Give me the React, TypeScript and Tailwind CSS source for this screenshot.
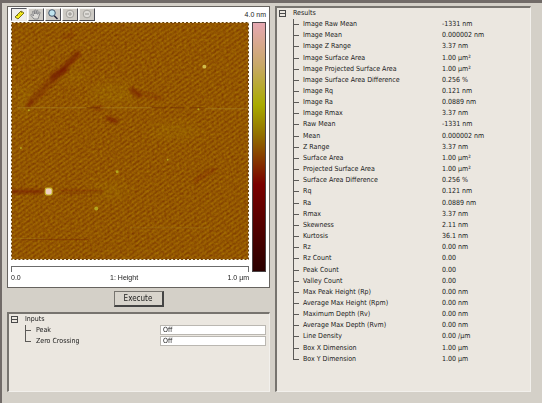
import type { ReactNode } from "react";

const results: [string, string][] = [
  ["Image Raw Mean", "-1331 nm"],
  ["Image Mean", "0.000002 nm"],
  ["Image Z Range", "3.37 nm"],
  ["Image Surface Area", "1.00 µm²"],
  ["Image Projected Surface Area", "1.00 µm²"],
  ["Image Surface Area Difference", "0.256 %"],
  ["Image Rq", "0.121 nm"],
  ["Image Ra", "0.0889 nm"],
  ["Image Rmax", "3.37 nm"],
  ["Raw Mean", "-1331 nm"],
  ["Mean", "0.000002 nm"],
  ["Z Range", "3.37 nm"],
  ["Surface Area", "1.00 µm²"],
  ["Projected Surface Area", "1.00 µm²"],
  ["Surface Area Difference", "0.256 %"],
  ["Rq", "0.121 nm"],
  ["Ra", "0.0889 nm"],
  ["Rmax", "3.37 nm"],
  ["Skewness", "2.11 nm"],
  ["Kurtosis", "36.1 nm"],
  ["Rz", "0.00 nm"],
  ["Rz Count", "0.00"],
  ["Peak Count", "0.00"],
  ["Valley Count", "0.00"],
  ["Max Peak Height (Rp)", "0.00 nm"],
  ["Average Max Height (Rpm)", "0.00 nm"],
  ["Maximum Depth (Rv)", "0.00 nm"],
  ["Average Max Depth (Rvm)", "0.00 nm"],
  ["Line Density", "0.00 /µm"],
  ["Box X Dimension", "1.00 µm"],
  ["Box Y Dimension", "1.00 µm"],
];

const inputs = [
  { id: "peak", label: "Peak" },
  { id: "zero-crossing", label: "Zero Crossing" },
];

const branch =
  "bg-[linear-gradient(#5c5a57,#5c5a57),linear-gradient(#5c5a57,#5c5a57)] bg-[position:left_top,left_center] bg-no-repeat";
const branchMid = "bg-[length:1px_100%,6px_1px]";
const branchEnd = "bg-[length:1px_50%,6px_1px]";

function ToolButton({ label, active, children }: { label: string; active?: boolean; children: ReactNode }) {
  return (
    <button
      aria-label={label}
      aria-pressed={active}
      className={
        "flex h-[13px] w-4 items-center justify-center border " +
        (active
          ? "border-t-[#55565e] border-l-[#55565e] border-r-[#e8e6e2] border-b-[#e8e6e2] bg-[#f0efec]"
          : "border-t-[#f4f3f0] border-l-[#f4f3f0] border-r-[#4c4d55] border-b-[#4c4d55] bg-[#cdcac4]")
      }
    >
      <svg viewBox="0 0 14 11" className="h-[11px] w-3.5" fill="none">
        {children}
      </svg>
    </button>
  );
}

function Toggle({ label }: { label: string }) {
  return (
    <button aria-label={label} aria-expanded="true" className="flex size-[7px] items-center border border-[#4a4a4a]">
      <span className="h-px w-full bg-[#4a4a4a]" />
    </button>
  );
}

function HeightMap() {
  return (
    <svg viewBox="0 0 240 240" className="block h-auto w-full" role="img" aria-label="Height map">
      <defs>
        <pattern id="scan" width="4" height="4" patternUnits="userSpaceOnUse" patternTransform="rotate(-36)">
          <rect width="4" height="4" fill="#a06402" />
          <rect width="4" height="2" fill="#8a4a00" />
        </pattern>
        <filter id="grain" x="0" y="0" width="100%" height="100%" colorInterpolationFilters="sRGB">
          <feTurbulence type="fractalNoise" baseFrequency="0.4" numOctaves="2" seed="4" />
          <feColorMatrix values="0.4 0 0 0 0.36  0.6 0 0 0 0.03  0 0 0 0 0  0 0 0 0 0.35" />
        </filter>
        <filter id="soft" x="-10" y="-10" width="260" height="260" filterUnits="userSpaceOnUse">
          <feGaussianBlur stdDeviation="1.6" />
        </filter>
        <filter id="wide" x="-10" y="-10" width="260" height="260" filterUnits="userSpaceOnUse">
          <feGaussianBlur stdDeviation="6" />
        </filter>
      </defs>
      <rect width="240" height="240" fill="url(#scan)" />
      <g filter="url(#wide)" fill="#a07600" opacity="0.55">
        <ellipse cx="64" cy="53" rx="12" ry="7" />
        <ellipse cx="104" cy="72" rx="26" ry="10" />
        <ellipse cx="14" cy="80" rx="8" ry="16" />
        <ellipse cx="165" cy="110" rx="26" ry="7" />
        <ellipse cx="98" cy="170" rx="20" ry="7" />
      </g>
      <rect width="240" height="240" filter="url(#grain)" />
      <g filter="url(#soft)" stroke="#741800" strokeLinecap="round">
        <path d="M67 32 50 50" strokeWidth="5" opacity="0.7" />
        <path d="M54 48 43 55" strokeWidth="7" opacity="0.65" />
        <path d="M46 54 20 81" strokeWidth="6" opacity="0.4" />
        <path d="M17 85 20 81" strokeWidth="4" opacity="0.6" />
        <path d="M54 15 62 12" strokeWidth="4" opacity="0.25" />
        <path d="M98 97 106 100" strokeWidth="4" opacity="0.75" />
        <path d="M122 68 129 74" strokeWidth="5" opacity="0.6" />
        <path d="M130 72 150 76" strokeWidth="4" opacity="0.25" />
        <path d="M85 87 92 87" strokeWidth="3" opacity="0.5" />
        <path d="M-4 171H32" strokeWidth="3" opacity="0.8" />
        <path d="M50 171H92" strokeWidth="2" opacity="0.5" />
        <path d="M186 160 204 149" strokeWidth="5" opacity="0.2" />
      </g>
      <path d="M76 86.500H90M142 86.500H196" stroke="#6f2c00" opacity="0.6" strokeDasharray="14 5" />
      <path d="M6 86.500H76M90 86.500H142M196 87.500H240" stroke="#b08c28" opacity="0.55" />
      <path d="M10 219.500H78" stroke="#742400" opacity="0.5" />
      <path d="M0 218.500H35M120 207.500H200" stroke="#a6811d" opacity="0.35" />
      <rect x="34" y="167" width="8" height="8" rx="2" fill="#c4b428" />
      <rect x="35" y="168" width="6" height="6" rx="2" fill="#f0cfc0" />
      <g fill="#b5a51c">
        <circle cx="195" cy="45" r="2" fill="#d2bd4a" />
        <circle cx="107" cy="151" r="1.500" />
        <circle cx="86" cy="188" r="2" />
        <circle cx="18" cy="89" r="1" />
        <circle cx="10" cy="127" r="1" />
        <circle cx="189" cy="88" r="1" />
        <circle cx="158" cy="139" r="1" />
      </g>
      <rect x="0.5" y="0.5" width="239" height="239" fill="none" stroke="#f6ead2" />
      <rect x="0.5" y="0.5" width="239" height="239" fill="none" stroke="#5e3a06" strokeDasharray="2 2" />
    </svg>
  );
}

export default function App() {
  return (
    <div className="grid min-h-screen grid-cols-[263fr_256fr] gap-[5px] border-t-3 border-l-2 border-[#716b68] bg-[#d4d0c8] pt-[3px] pr-[11px] pb-[11px] pl-[5px] font-['DejaVu_Sans_Condensed','DejaVu_Sans',sans-serif] text-[7px] leading-[11px] text-[#1a1a1a]">
      <div className="flex min-w-0 flex-col">
        <section className="border border-[#66635f] bg-white px-[3px] pb-1 font-['Liberation_Sans',Arial,sans-serif]">
          <div className="flex items-center justify-between pt-px pb-px">
            <div className="flex gap-px">
              <ToolButton label="Measure" active>
                <path d="M3 8 9 2l3 2-6 6z" fill="#f7ec18" stroke="#77711c" />
                <path d="m5 6 1 1M7 4.500l1 1M9 3l1 1" stroke="#77711c" strokeWidth="0.8" />
              </ToolButton>
              <ToolButton label="Pan">
                <path
                  d="M5 10 2 6.500c-.7-1 .4-1.500 1.200-.8L4.500 7 3.600 2.800c0-1 1-1 1.300-.2L5.600 5V1.500c.2-.9 1.300-.8 1.400 0V5l.8-3.200c.3-.8 1.300-.5 1.200.3L8.700 5.400l1.200-2c.5-.6 1.400-.2 1.100.6L9.800 7.500 9 10z"
                  fill="#dddbd7"
                  stroke="#77777b"
                  strokeWidth="0.8"
                />
              </ToolButton>
              <ToolButton label="Zoom">
                <path d="m8 6.500 3.500 3.500" stroke="#24243a" strokeWidth="1.5" />
                <circle cx="6" cy="4" r="3.300" fill="#bfe3ee" stroke="#34465e" strokeWidth="0.9" />
              </ToolButton>
              <ToolButton label="Zoom in">
                <circle cx="7" cy="5" r="3.800" fill="#dedcd8" stroke="#96948f" strokeWidth="0.8" />
                <path d="M5 5h4M7 3v4" stroke="#96948f" />
              </ToolButton>
              <ToolButton label="Zoom out">
                <circle cx="7" cy="5" r="3.800" fill="#dedcd8" stroke="#96948f" strokeWidth="0.8" />
                <path d="M5 5h4" stroke="#96948f" />
              </ToolButton>
            </div>
            <span>4.0 nm</span>
          </div>

          <div className="flex gap-[3px]">
            <div className="min-w-0 flex-1">
              <HeightMap />
              <div className="mt-[6px] h-[6px] border border-b-0 border-[#6b6b6b]" />
            </div>
            <div className="w-3.5 border border-[#4b4446] bg-[linear-gradient(#e6a8b2,#c8a868_17%,#a9ab00_33%,#927000_45%,#7a0000_65%,#2b0000)]" />
          </div>

          <div className="flex justify-between pr-[17px]">
            <span>0.0</span>
            <span>1: Height</span>
            <span>1.0 µm</span>
          </div>
        </section>

        <button className="mt-[3px] mb-[5px] h-4 w-[50px] self-center border border-t-[#77746f] border-l-[#77746f] border-r-2 border-b-2 border-r-[#444] border-b-[#444] bg-[#d8d4cc] text-[8px] leading-[11px]">
          Execute
        </button>

        <section className="flex-1 border-t-2 border-l-2 border-r border-b border-t-[#77746f] border-l-[#77746f] border-r-[#f2f0ec] border-b-[#f2f0ec] bg-[#ebe7e0] pr-[3px] pl-[2px]">
          <div className="flex items-center gap-[7px]">
            <Toggle label="Collapse inputs" />
            <h2>Inputs</h2>
          </div>
          {inputs.map(({ id, label }, i) => (
            <div key={id} className="flex h-[11px] pl-[14px]">
              <span className={`w-[11px] ${branch} ${i === inputs.length - 1 ? branchEnd : branchMid}`} />
              <label htmlFor={id} className="flex-1">
                {label}
              </label>
              <select
                id={id}
                className="h-[10px] w-[106px] appearance-none border border-[#bab7b1] bg-white pl-[2px] leading-[8px]"
              >
                <option>Off</option>
                <option>On</option>
              </select>
            </div>
          ))}
        </section>
      </div>

      <section className="min-w-0 border-t-2 border-l-2 border-r border-b border-t-[#77746f] border-l-[#77746f] border-r-[#f2f0ec] border-b-[#f2f0ec] bg-[#ebe7e0] pl-[2px]">
        <div className="flex items-center gap-[7px]">
          <Toggle label="Collapse results" />
          <h2>Results</h2>
        </div>
        <table className="ml-[14px] h-[346px] border-collapse text-left">
          <tbody>
            {results.map(([name, value], i) => (
              <tr key={i}>
                <th
                  scope="row"
                  className={`w-[149px] p-0 pl-[10px] font-normal ${branch} ${i === results.length - 1 ? branchEnd : branchMid}`}
                >
                  {name}
                </th>
                <td className="p-0">{value}</td>
              </tr>
            ))}
          </tbody>
        </table>
      </section>
    </div>
  );
}
